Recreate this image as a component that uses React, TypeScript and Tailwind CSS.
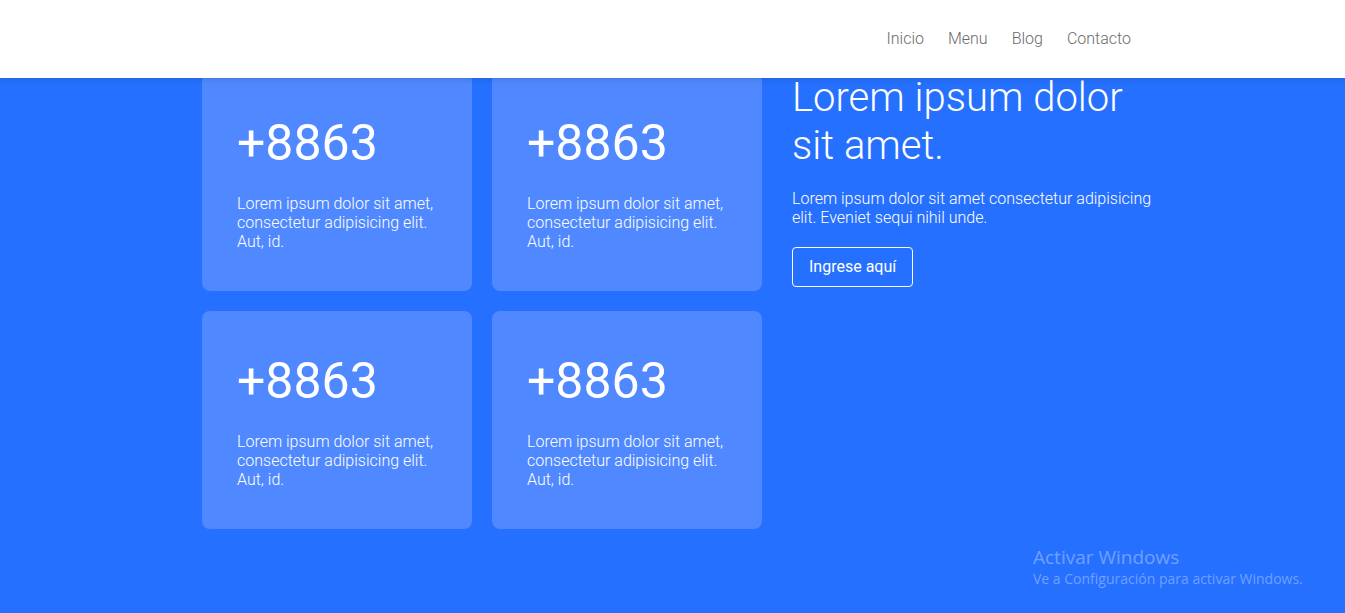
import React from "react";

const links = ["Inicio", "Menu", "Blog", "Contacto"];

const StatCard: React.FC = () => (
  <div className="h-[218px] rounded-lg bg-[#5089ff] px-[35px] pt-[40px]">
    <h3 className="text-[50px] leading-[60px] font-normal text-white">+8863</h3>
    <p className="mt-[21px] text-[16px] leading-[19px] font-light text-white">
      Lorem ipsum dolor sit amet, consectetur adipisicing elit. Aut, id.
    </p>
  </div>
);

export default function App() {
  return (
    <div className="relative min-h-screen w-full overflow-hidden bg-[#2670ff] font-['Roboto',sans-serif]">
      <header className="absolute inset-x-0 top-0 z-10 flex h-[78px] items-center justify-end bg-white pr-[214px] shadow-[0_2px_6px_rgba(0,0,0,0.12)]">
        <nav className="flex gap-6">
          {links.map((l) => (
            <a key={l} href="#" className="text-[16px] font-light text-[#6b6b6b]">
              {l}
            </a>
          ))}
        </nav>
      </header>

      <section className="flex gap-[30px] pl-[202px] pt-[73px]">
        <div className="grid w-[560px] grid-cols-2 gap-5">
          <StatCard />
          <StatCard />
          <StatCard />
          <StatCard />
        </div>
        <div className="w-[362px] pt-px text-white">
          <h1 className="text-[40px] leading-[48px] font-light">Lorem ipsum dolor sit amet.</h1>
          <p className="mt-[19px] text-[16px] leading-[19px] font-light">
            Lorem ipsum dolor sit amet consectetur adipisicing elit. Eveniet sequi nihil unde.
          </p>
          <button className="mt-[20px] h-10 rounded border border-white px-4 text-[16px] font-normal text-white">
            Ingrese aquí
          </button>
        </div>
      </section>

      <div className="pointer-events-none absolute left-[1033px] top-[545px] font-['Open_Sans',sans-serif] text-white/35">
        <div className="text-[19px] leading-[24px]">Activar Windows</div>
        <div className="text-[14px] leading-[20px]">Ve a Configuración para activar Windows.</div>
      </div>
    </div>
  );
}
